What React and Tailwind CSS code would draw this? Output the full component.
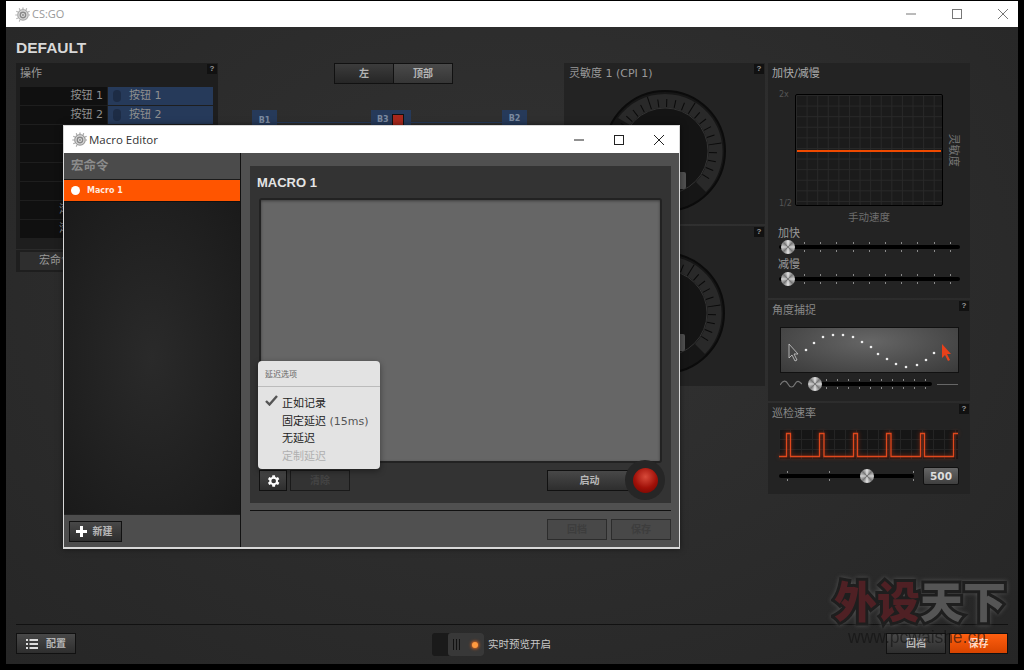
import React from 'react';

const sans = "font-['DejaVu_Sans','Noto_Sans_CJK_SC',sans-serif]";
const ui = "font-['Open_Sans','Noto_Sans_CJK_SC',sans-serif]";

function Logo({ color = '#9a9a9a' }) {
  const spokes = Array.from({ length: 9 }, (_, i) => i * 30 - 150);
  return (
    <svg width="15" height="15" viewBox="0 0 16 16" className="shrink-0">
      {spokes.map((a) => (
        <line key={a} x1="8.5" y1="2" x2="8.5" y2="0.4" stroke={color} strokeWidth="1.2" transform={`rotate(${a} 8.5 8.5)`} />
      ))}
      <circle cx="8.5" cy="8.500" r="5.600" fill="#ddd" stroke={color} strokeWidth="1.300" />
      <circle cx="8.5" cy="8.500" r="2.900" fill="none" stroke="#888" strokeWidth="1.500" />
      <circle cx="8.5" cy="8.500" r="1" fill="#888" />
    </svg>
  );
}

function Help() {
  return (
    <span className="absolute right-[1px] top-[1px] w-[10px] h-[10px] bg-[#111] text-[#999] text-[8px] leading-[10px] text-center font-bold font-['Liberation_Sans',sans-serif]">
      ?
    </span>
  );
}

function Slider({ className, knob, ticks, tickStart, tickGap }) {
  return (
    <div className={`relative h-[4px] rounded-full bg-black ${className}`}>
      {Array.from({ length: ticks }, (_, i) => (
        <span
          key={i}
          className="absolute top-[-3px] w-px h-[10px] bg-[repeating-linear-gradient(to_bottom,#8a8a8a_0_2px,transparent_2px_8px)]"
          style={{ left: tickStart + i * tickGap }}
        />
      ))}
      <span
        className="absolute top-[-5px] w-[14px] h-[14px] rounded-full bg-[conic-gradient(#e4e4e4,#777,#d0d0d0,#777,#e4e4e4,#777,#d0d0d0,#777,#e4e4e4)]"
        style={{ left: knob }}
      />
    </div>
  );
}

function Dial({ className }) {
  const ticks = Array.from({ length: 25 }, (_, i) => -118 + i * 10);
  return (
    <div className={`relative w-[122px] h-[122px] ${className}`}>
      <svg width="122" height="122" viewBox="0 0 122 122">
        <circle cx="61" cy="61" r="60" fill="#161616" stroke="#0b0b0b" strokeWidth="2" />
        <path d="M 14 28 A 58 58 0 0 1 108 28 A 58 58 0 0 1 102 102 L 92 92 A 44 44 0 0 0 96 35 A 44 44 0 0 0 26 35 Z" fill="#292929" />
        <circle cx="61" cy="61" r="43" fill="#141414" stroke="#333" strokeWidth="1" />
        {ticks.map((a, i) => (
          <line
            key={a}
            x1="61"
            y1={i % 5 === 0 ? 4 : 9}
            x2="61"
            y2="17"
            stroke="#0a0a0a"
            strokeWidth="1"
            transform={`rotate(${a} 61 61)`}
          />
        ))}
      </svg>
      <span className="absolute right-[40px] top-[82px] w-[18px] h-[17px] rounded-[2px] bg-[#505050]" />
    </div>
  );
}

function DarkButton({ children, className }) {
  return (
    <div className={`flex items-center justify-center border border-[#111] bg-gradient-to-b from-[#484848] to-[#2e2e2e] text-[10px] font-bold text-[#b8b8b8] ${sans} ${className}`}>
      {children}
    </div>
  );
}

function AssignRow({ label, action }) {
  return (
    <div className="flex gap-[1px] h-[18px] mb-[1px]">
      <div className="w-[87px] bg-[#101010] pr-[4px] text-[11px] leading-[18px] text-[#8f8f8f] whitespace-nowrap flex justify-end">
        {label}
      </div>
      <div className="w-[105px] bg-[#263a5a] flex items-center text-[11px] text-[#8f8f8f]">
        {action && (
          <>
            <span className="ml-[5px] w-[8px] h-[12px] rounded-full bg-[#1d2c45]" />
            <span className="ml-[8px]">{action}</span>
          </>
        )}
      </div>
    </div>
  );
}

function WindowButtons({ color = '#555', gap = 'gap-[30px]' }) {
  return (
    <div className={`flex items-center ${gap}`}>
      <svg width="10" height="10" viewBox="0 0 10 10"><line x1="0" y1="5" x2="10" y2="5" stroke={color} /></svg>
      <svg width="10" height="10" viewBox="0 0 10 10"><rect x="0.5" y="0.5" width="9" height="9" fill="none" stroke={color} /></svg>
      <svg width="10" height="10" viewBox="0 0 10 10"><path d="M0 0 L10 10 M10 0 L0 10" stroke={color} /></svg>
    </div>
  );
}

function MacroEditor() {
  return (
    <div className="absolute left-[63px] top-[125px] w-[617px] h-[424px] border border-[#d8d8d8] border-b-2 bg-[#505050] flex flex-col shadow-[0_0_6px_rgba(0,0,0,0.5)]">
      <div className="h-[27px] bg-white shrink-0 flex items-center pl-[8px] pr-[15px]">
        <Logo />
        <span className={`ml-[2px] text-[11.5px] text-[#333] ${ui}`}>Macro Editor</span>
        <div className="ml-auto">
          <WindowButtons color="#222" gap="gap-[30px]" />
        </div>
      </div>
      <div className="flex-1 flex min-h-0">
        <div className="w-[177px] shrink-0 border-r border-[#111] flex flex-col">
          <div className={`h-[27px] bg-[#4b4b4b] border-b border-[#1b1b1b] pl-[7px] text-[12.5px] leading-[26px] font-bold text-[#8c8c8c] ${sans}`}>
            宏命令
          </div>
          <div className="h-[21px] bg-[#ff5500] flex items-center pl-[7px] text-[8px] font-bold text-[#ffe9df] font-['DejaVu_Sans',sans-serif]">
            <span className="w-[9px] h-[9px] rounded-full bg-white mr-[7px]" />
            Macro 1
          </div>
          <div className="flex-1 bg-[radial-gradient(ellipse_at_center,#2a2a2a,#1a1a1a)] border-t border-[#111]" />
          <div className="h-[33px] bg-[#4d4d4d] border-t border-[#222] flex items-center pl-[5px]">
            <DarkButton className="w-[53px] h-[21px] gap-[6px] pr-[3px] text-[#a8a8a8]">
              <svg width="11" height="11" viewBox="0 0 11 11"><path d="M4 0h3v4h4v3H7v4H4V7H0V4h4z" fill="#fff" /></svg>
              新建
            </DarkButton>
          </div>
        </div>
        <div className="flex-1 min-w-0 pl-[9px] pr-[8px] pt-[13px] flex flex-col">
          <div className="h-[337px] bg-[#333333] pl-[9px] pr-[9px] flex flex-col relative">
            <div className="h-[32px] pt-[7px] ml-[-2px] text-[13px] font-bold text-[#e4e4e4] font-['Liberation_Sans',sans-serif]">MACRO 1</div>
            <div className="h-[265px] bg-[#666666] border-2 border-[#222] rounded-[3px] shadow-[inset_0_1px_3px_rgba(0,0,0,0.4)]" />
            <div className="flex items-center mt-[7px] h-[21px]">
              <DarkButton className="w-[28px] h-[21px]">
                <svg width="16" height="16" viewBox="0 0 24 24" fill="#fff">
                  <path d="M19.4 13a7.5 7.5 0 0 0 0-2l2.1-1.6-2-3.4-2.5 1a7.5 7.5 0 0 0-1.7-1L15 3.3h-4L10.600 6a7.500 7.500 0 0 0-1.700 1l-2.500-1-2 3.400L6.500 11a7.500 7.500 0 0 0 0 2l-2.100 1.600 2 3.400 2.500-1a7.500 7.500 0 0 0 1.700 1l.4 2.700h4l.4-2.700a7.500 7.500 0 0 0 1.700-1l2.500 1 2-3.400zM13 15.500a3.500 3.500 0 1 1 0-7 3.500 3.500 0 0 1 0 7z" />
                </svg>
              </DarkButton>
              <div className={`ml-[3px] w-[60px] h-[21px] border border-[#1a1a1a] bg-[#333] text-[10px] leading-[19px] text-center text-[#444] font-bold ${sans}`}>清除</div>
              <DarkButton className="ml-auto mr-[30px] w-[85px] h-[21px]">启动</DarkButton>
            </div>
            <div className="absolute right-[6px] bottom-[3px] w-[40px] h-[40px] rounded-full bg-[#262626] flex items-center justify-center">
              <span className="w-[25px] h-[25px] rounded-full bg-[radial-gradient(circle_at_50%_35%,#d84a3a,#a01008_55%,#6a0500)]" />
            </div>
            <div className="absolute left-[8px] top-[195px] w-[122px] h-[108px] rounded-[4px] bg-[#e3e3e3] shadow-[0_2px_6px_rgba(0,0,0,0.4)]">
              <div className={`h-[26px] pl-[7px] pt-[8px] text-[8px] leading-[12px] text-[#666] border-b border-[#bbb] ${sans}`}>延迟选项</div>
              <div className={`pl-[24px] pt-[8px] text-[11px] leading-[17.7px] text-[#222] relative ${sans}`}>
                <svg className="absolute left-[7px] top-[8px]" width="13" height="11" viewBox="0 0 13 11"><path d="M1 6 L4.500 9.500 L12 1" fill="none" stroke="#555" strokeWidth="2.400" /></svg>
                <div>正如记录</div>
                <div className="whitespace-nowrap">固定延迟 <span className="text-[#555]">(15ms)</span></div>
                <div>无延迟</div>
                <div className="text-[#b0b0b0]">定制延迟</div>
              </div>
            </div>
          </div>
          <div className="mt-[7px] border-t border-[#111] pt-[8px] flex justify-end gap-[4px]">
            <div className={`w-[60px] h-[21px] border border-[#2c2c2c] bg-[#484848] text-[10px] leading-[19px] text-center font-bold text-[#3d3d3d] ${sans}`}>回档</div>
            <div className={`w-[60px] h-[21px] border border-[#2c2c2c] bg-[#484848] text-[10px] leading-[19px] text-center font-bold text-[#3d3d3d] ${sans}`}>保存</div>
          </div>
        </div>
      </div>
    </div>
  );
}

export default function App() {
  const labels = ['按钮 1', '按钮 2', '', '', '', '', '滚轮向上', '滚轮向下'];
  const dots = [
    [25, 22], [33, 15], [42, 9], [52, 7], [62, 7], [72, 9], [81, 14], [90, 19],
    [97, 26], [106, 31], [115, 36], [125, 39], [136, 37], [145, 32], [153, 25],
  ];
  return (
    <div className={`relative w-[1024px] h-[670px] overflow-hidden bg-black px-[6px] pt-px pb-[6px] flex flex-col ${sans}`}>
      <div className="h-[26px] bg-white shrink-0 flex items-center pl-[9px] pr-[10px]">
        <Logo color="#aaa" />
        <span className={`ml-[2px] text-[11px] text-[#999] ${ui}`}>CS:GO</span>
        <div className="ml-auto"><WindowButtons color="#777" gap="gap-[36px]" /></div>
      </div>

      <div className="flex-1 flex flex-col px-[10px] bg-[radial-gradient(ellipse_at_50%_40%,#333333,#262626)]">
        <div className="h-[36px] pt-[10px] text-[15.5px] leading-[22px] font-bold text-[#d8d8d8] font-['Liberation_Sans',sans-serif]">DEFAULT</div>

        <div className="flex h-[561px] items-start">
          {/* actions */}
          <div className="w-[202px] shrink-0 flex flex-col">
            <div className="relative bg-[#1e1e1e] h-[186px] px-[4px]">
              <Help />
              <div className="h-[24px] text-[11px] leading-[21px] text-[#999]">操作</div>
              {labels.map((l, i) => (
                <AssignRow key={i} label={l} action={i < 2 ? l : null} />
              ))}
            </div>
            <div className="bg-[#1e1e1e] h-[22px] px-[4px] mt-px">
              <div className="w-[87px] h-[18px] mt-[2px] bg-[#2e2e2e] text-[11px] leading-[18px] text-[#999] pl-[19px]">宏命令</div>
            </div>
          </div>

          {/* mouse view */}
          <div className="w-[346px] shrink-0 flex flex-col items-center">
            <div className="flex w-[119px] h-[21px] border border-[#111] text-[10px] font-bold text-[#b5b5b5] ml-[5px]">
              <div className="w-[59px] bg-gradient-to-b from-[#3c3c3c] to-[#262626] border-r border-[#111] text-center leading-[19px]">左</div>
              <div className="flex-1 bg-gradient-to-b from-[#4a4a4a] to-[#363636] text-center leading-[19px]">顶部</div>
            </div>
            <div className="mt-[26px] w-full pl-[34px] flex items-start text-[8px] font-bold text-[#7c8aa0]">
              <div className="w-[25px] h-[20px] bg-[#263a5a] text-center leading-[22px]">B1</div>
              <div className="w-[94px] h-px mt-[12px] bg-[#263a5a]" />
              <div className="w-[40px] h-[20px] bg-[#263a5a] flex items-center pl-[6px] gap-[3px]">
                B3
                <span className="w-[12px] h-[12px] bg-[#a8281c] border border-[#111]" />
              </div>
              <div className="w-[91px] h-px mt-[12px] bg-[#263a5a]" />
              <div className="w-[25px] h-[20px] bg-[#263a5a] text-center leading-[18px]">B2</div>
            </div>
          </div>

          {/* sensitivity */}
          <div className="w-[201px] shrink-0 flex flex-col gap-[2px]">
            <div className="relative h-[161px] bg-[#232323] pl-[5px] overflow-hidden">
              <Help />
              <div className="text-[11px] leading-[21px] text-[#999]">灵敏度 1 (CPI 1)</div>
              <Dial className="ml-[35px] mt-[6px]" />
            </div>
            <div className="relative h-[160px] bg-[#232323] overflow-hidden">
              <Help />
              <Dial className="ml-[39px] mt-[26px]" />
            </div>
          </div>

          {/* right column */}
          <div className="ml-[3px] w-[202px] shrink-0 flex flex-col gap-[2px]">
            <div className="relative h-[235px] bg-[#232323] px-[4px]">
              <div className="text-[11px] leading-[21px] text-[#aaa]">加快/减慢</div>
              <div className="flex mt-[10px] ml-[7px]">
                <div className="mt-[-5px] mb-[-4px] w-[16px] h-[121px] flex flex-col justify-between text-[8px] text-[#555]">
                  <span>2x</span>
                  <span>1/2</span>
                </div>
                <div className="relative w-[148px] h-[112px] rounded-[2px] border border-black bg-[#1b1b1b] bg-[linear-gradient(to_right,#282828_1px,transparent_1px),linear-gradient(to_bottom,#282828_1px,transparent_1px)] bg-[length:10.600px_10.600px]">
                  <div className="absolute left-px right-px top-[55px] h-[2px] bg-[#f04a00]" />
                </div>
                <div className="ml-[1px] h-[112px] w-[16px] flex items-center justify-center">
                  <span className="text-[11px] text-[#777] whitespace-nowrap rotate-90">灵敏度</span>
                </div>
              </div>
              <div className="ml-[23px] w-[148px] mt-[3px] text-center text-[10.500px] leading-[16px] text-[#6e6e6e]">手动速度</div>
              <div className="ml-[6px] mt-[2px] text-[11px] leading-[14px] text-[#999]">加快</div>
              <Slider className="ml-[7px] mt-[4px] w-[181px]" knob={2} tickStart={25} tickGap={16.200} ticks={10} />
              <div className="ml-[6px] mt-[9px] text-[11px] leading-[14px] text-[#999]">减慢</div>
              <Slider className="ml-[7px] mt-[5px] w-[181px]" knob={2} tickStart={25} tickGap={16.200} ticks={10} />
            </div>

            <div className="relative h-[101px] bg-[#232323] px-[4px]">
              <Help />
              <div className="h-[27px] text-[11px] leading-[22px] text-[#888]">角度捕捉</div>
              <div className="relative ml-[8px] w-[179px] h-[46px] border border-[#111] bg-[radial-gradient(ellipse_at_50%_30%,#666,#3a3a3a)]">
                <svg width="177" height="44" viewBox="0 0 177 44" className="absolute inset-0">
                  {dots.map(([x, y]) => (
                    <circle key={x} cx={x} cy={y} r="1.300" fill="#eee" />
                  ))}
                  <path d="M8 16 L8 30 L11 27 L14 33 L16 32 L13 26 L17 26 Z" fill="#444" stroke="#ccc" strokeWidth="0.800" />
                  <path d="M161 16 L161 30 L164 27 L167 33 L169 32 L166 26 L170 26 Z" fill="#e8401a" />
                </svg>
              </div>
              <div className="flex items-center mt-[7px] ml-[8px]">
                <svg width="22" height="8" viewBox="0 0 22 8"><path d="M0 5 C3 0 6 0 8 4 S13 8 15 4 S19 1 22 4" fill="none" stroke="#777" strokeWidth="1.200" /></svg>
                <Slider className="ml-[6px] w-[124px]" knob={0} tickStart={18} tickGap={11} ticks={10} />
                <span className="ml-[5px] w-[21px] h-px bg-[#666]" />
              </div>
            </div>

            <div className="relative h-[91px] bg-[#232323] px-[4px]">
              <Help />
              <div className="h-[26px] text-[11px] leading-[21px] text-[#888]">巡检速率</div>
              <div className="ml-[7px] w-[179px] h-[30px] bg-[#161616] bg-[linear-gradient(to_right,#242424_1px,transparent_1px),linear-gradient(to_bottom,#242424_1px,transparent_1px)] bg-[length:11px_10px]">
                <svg width="179" height="30" viewBox="0 0 179 30" className="drop-shadow-[0_0_2px_#b03010]">
                  <path d="M0 27.500 H7.500 V4.500 H11.500 V27.500 H40.500 V4.500 H45 V27.500 H74.500 V4.500 H78.500 V27.500 H107.500 V4.500 H112 V27.500 H141.500 V4.500 H145.500 V27.500 H174.500 V4.500 H179" fill="none" stroke="#e0481c" strokeWidth="1.300" />
                </svg>
              </div>
              <div className="flex items-center mt-[8px] ml-[7px]">
                <Slider className="w-[135px]" knob={81} tickStart={8} tickGap={42} ticks={4} />
                <div className="ml-[9px] w-[36px] h-[18px] rounded-[2px] border border-[#111] bg-gradient-to-b from-[#666] to-[#3f3f3f] text-center text-[10.500px] leading-[16px] font-bold text-[#ddd]">500</div>
              </div>
            </div>
          </div>
        </div>

        {/* footer */}
        <div className="border-t border-[#111] h-[40px] flex items-start pt-[8px] relative">
          <DarkButton className="w-[60px] h-[21px] gap-[8px]">
            <svg width="12" height="10" viewBox="0 0 12 10" fill="#ddd">
              <path d="M0 0h2v2H0zM3.500 0H12v2H3.500zM0 4h2v2H0zM3.500 4H12v2H3.500zM0 8h2v2H0zM3.500 8H12v2H3.500z" />
            </svg>
            配置
          </DarkButton>
          <div className="ml-[356px] flex items-center">
            <div className="relative w-[52px] h-[23px] rounded-[3px] bg-[#1a1a1a] flex justify-end">
              <div className="w-[36px] h-[23px] rounded-[3px] bg-[#383838] flex items-center pl-[5px] gap-[2px]">
                <span className="w-px h-[11px] bg-[#111]" />
                <span className="w-px h-[11px] bg-[#111]" />
                <span className="w-px h-[11px] bg-[#111]" />
                <span className="ml-[10px] w-[6px] h-[6px] rounded-full bg-[#ff9a40] shadow-[0_0_3px_1px_#d06020]" />
              </div>
            </div>
            <span className="ml-[4px] text-[10.500px] text-[#c8c8c8]">实时预览开启</span>
          </div>
          <div className="ml-auto flex gap-[3px]">
            <DarkButton className="w-[60px] h-[21px]">回档</DarkButton>
            <div className="w-[59px] h-[21px] border border-[#111] bg-gradient-to-b from-[#ff5f10] to-[#d84400] text-[10px] leading-[19px] text-center font-bold text-[#ffd9c4]">保存</div>
          </div>
        </div>
      </div>

      <MacroEditor />

      {/* site watermark */}
      <div className="absolute left-[834px] top-[572px] text-[43px] leading-[54px] font-black whitespace-nowrap font-['Noto_Sans_CJK_SC',sans-serif] [-webkit-text-stroke:6px_#1e1e1e] [paint-order:stroke_fill] drop-shadow-[0_0_2px_#555]">
        <span className="text-[#4f2024]">外设</span>
        <span className="text-[#555555]">天下</span>
      </div>
      <div className="absolute left-[848px] top-[627px] text-[17.500px] leading-[20px] text-[#111] opacity-60 font-['Liberation_Sans',sans-serif] whitespace-nowrap">
        www.pcwaishe.cn
      </div>
    </div>
  );
}
